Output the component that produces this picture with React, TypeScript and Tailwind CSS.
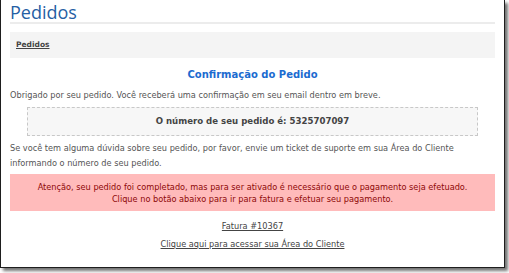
import React from 'react';

export default function App() {
  return (
    <div className="w-[509px] h-[273px] bg-white overflow-hidden">
      <div className="w-[505px] h-[268px] bg-white border-l border-r border-b border-[#1e1e1e] shadow-[3px_3px_3px_rgba(0,0,0,0.55)] px-[9px] font-['DejaVu_Sans',sans-serif] text-[8.2px] text-[#555]">
        {/* Title */}
        <h1 className="pt-[2px] font-['Open_Sans',sans-serif] text-[18px] leading-[20px] text-[#2560a4] border-b-2 border-[#ececec]">
          Pedidos
        </h1>

        {/* Breadcrumb */}
        <div className="mt-[8px] h-[26px] bg-[#f4f4f4] flex items-center px-[6px]">
          <a className="font-bold underline text-[#444] text-[7.5px]">Pedidos</a>
        </div>

        <h2 className="mt-[10px] text-center font-bold text-[10px] text-[#1b6bd0] leading-[14px]">
          Confirmação do Pedido
        </h2>

        <p className="mt-[6px] leading-[14px]">
          Obrigado por seu pedido. Você receberá uma confirmação em seu email dentro em breve.
        </p>

        <div className="mx-[17px] mt-[5px] h-[29px] flex items-center justify-center border border-dashed border-[#c8c8c8] bg-[#f7f7f7] font-bold text-[#444] text-[8.6px]">
          O número de seu pedido é: 5325707097
        </div>

        <p className="mt-[5px] leading-[15px]">
          Se você tem alguma dúvida sobre seu pedido, por favor, envie um ticket de suporte em sua Área do Cliente informando o número de seu pedido.
        </p>

        <div className="mt-[3px] h-[37px] bg-[#ffbbbb] flex flex-col justify-center items-center text-center text-[#8e0808] leading-[12px]">
          <div>Atenção, seu pedido foi completado, mas para ser ativado é necessário que o pagamento seja efetuado.</div>
          <div>Clique no botão abaixo para ir para fatura e efetuar seu pagamento.</div>
        </div>

        <div className="mt-[9px] text-center leading-[12px]">
          <a className="underline text-[#444]">Fatura #10367</a>
        </div>
        <div className="mt-[6px] text-center leading-[12px]">
          <a className="underline text-[#444]">Clique aqui para acessar sua Área do Cliente</a>
        </div>
      </div>
    </div>
  );
}
